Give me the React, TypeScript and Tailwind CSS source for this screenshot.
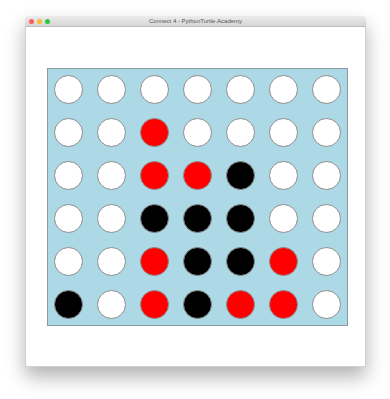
const BOARD = [
  'WWWWWWW',
  'WWRWWWW',
  'WWRRBWW',
  'WWBBBWW',
  'WWRBBRW',
  'BWRBRRW',
]

const discColor: Record<string, string> = {
  W: 'bg-white',
  R: 'bg-[#ff0000]',
  B: 'bg-black',
}

export default function App() {
  return (
    <div className="w-[390px] h-[399px] bg-white pt-[16px] pl-[25px] font-['Liberation_Sans',sans-serif]">
      <div className="w-[341px] shadow-[0_10px_18px_rgba(0,0,0,0.3)]">
        {/* Title bar */}
        <div className="relative h-[11px] bg-gradient-to-b from-[#ececec] to-[#d6d6d6] border-b border-[#bdbdbd] rounded-t-[3px] flex items-center justify-center">
          <div className="absolute left-[4px] top-[3px] flex gap-[3px]">
            <span className="block w-[5px] h-[5px] rounded-full bg-[#fc5f57]" />
            <span className="block w-[5px] h-[5px] rounded-full bg-[#fdbc2e]" />
            <span className="block w-[5px] h-[5px] rounded-full bg-[#2ac940]" />
          </div>
          <span className="text-[6px] leading-none text-[#555]">Connect 4 - PythonTurtle.Academy</span>
        </div>

        {/* Canvas */}
        <div className="h-[340px] bg-white border border-t-0 border-[#d0d0d0] pt-[41px] pl-[21px]">
          <div className="w-[301px] h-[258px] bg-[#add8e6] border border-[#8a9ba3] p-[6px] grid grid-cols-7 gap-[14px]">
            {BOARD.flatMap((row, r) =>
              row.split('').map((c, i) => (
                <div
                  key={`${r}-${i}`}
                  className={`w-[29px] h-[29px] rounded-full border border-[#8c8c8c] ${discColor[c]}`}
                />
              ))
            )}
          </div>
        </div>
      </div>
    </div>
  )
}
